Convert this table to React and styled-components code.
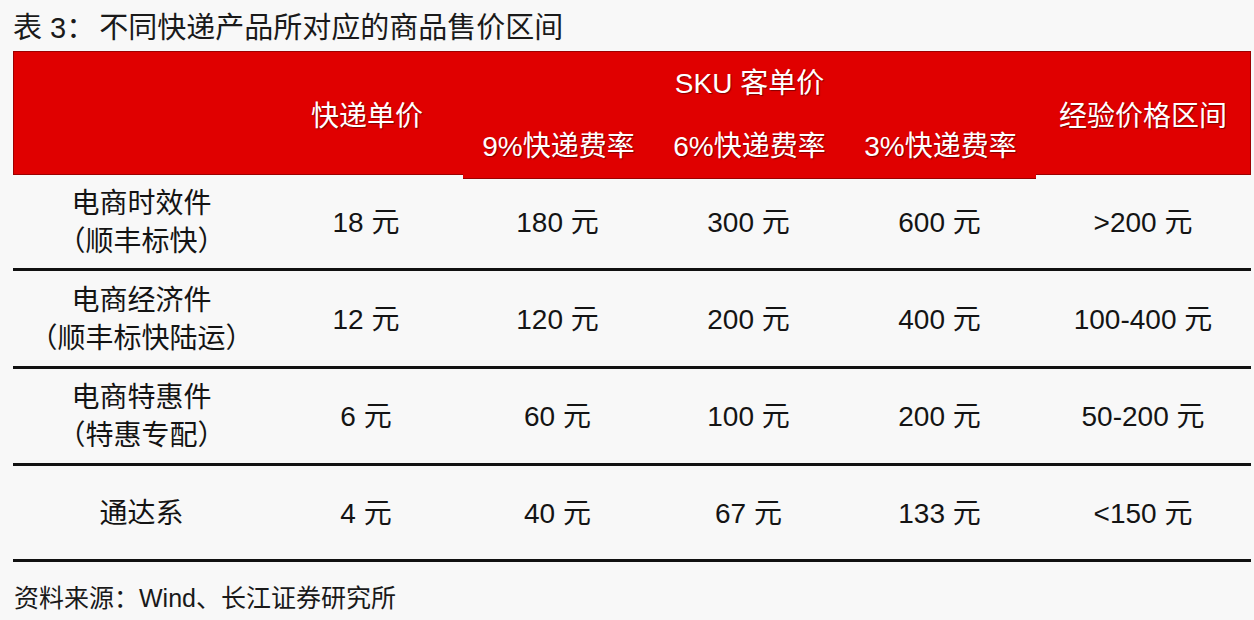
import React from "react";
import styled, { createGlobalStyle } from "styled-components";

const GlobalStyle = createGlobalStyle`
  html, body {
    margin: 0;
    padding: 0;
    background: #f8f8f8;
  }
  body {
    font-family: "Liberation Sans", "Noto Sans CJK SC", sans-serif;
    color: #141414;
  }
`;

const Page = styled.div`
  width: 1254px;
  height: 620px;
  box-sizing: border-box;
  padding: 0 3px 0 13px;
  overflow: hidden;
`;

const Title = styled.div`
  height: 51px;
  display: flex;
  align-items: center;
  font-size: 29px;
  color: #1a1a1a;
  padding-bottom: 2px;
  box-sizing: border-box;

  .label {
    margin-right: 4px;
  }
`;

const COLS = "257px 192px 191px 191px 191px 1fr";

const Header = styled.div`
  display: grid;
  grid-template-columns: ${COLS};
  grid-template-rows: 62px 62px;
  background: #e00000;
  border: 1px solid #9c0000;
  box-sizing: border-box;
  height: 124px;
  color: #fff;
  font-size: 28px;
  text-shadow: 1px 1px 1px rgba(90, 0, 0, 0.7);
`;

const HeadCell = styled.div`
  grid-row: ${({ row }) => row || "1 / span 2"};
  grid-column: ${({ col }) => col};
  display: flex;
  align-items: center;
  justify-content: center;
  padding-bottom: ${({ bottom }) => bottom || 0}px;
`;

const SubHead = styled.div`
  grid-row: 2;
  grid-column: ${({ col }) => col};
  display: flex;
  align-items: center;
  justify-content: center;
  font-size: 28px;
  background: #e00000;
  margin-bottom: -3px;
  padding-bottom: 4px;
  border-bottom: 1px solid #9c0000;
`;

const Row = styled.div`
  display: grid;
  grid-template-columns: ${COLS};
  height: ${({ h }) => h}px;
  border-bottom: 3px solid #111;
  box-sizing: border-box;
  font-size: 28px;
`;

const Cell = styled.div`
  display: flex;
  flex-direction: column;
  align-items: center;
  justify-content: center;
  line-height: 38px;
  padding-top: 2px;
`;

const Footer = styled.div`
  font-size: 25px;
  padding-top: 16px;
  padding-left: 1px;
  color: #1a1a1a;
`;

const rows = [
  { name: ["电商时效件", "（顺丰标快）"], vals: ["18 元", "180 元", "300 元", "600 元", ">200 元"], h: 96 },
  { name: ["电商经济件", "（顺丰标快陆运）"], vals: ["12 元", "120 元", "200 元", "400 元", "100-400 元"], h: 98 },
  { name: ["电商特惠件", "（特惠专配）"], vals: ["6 元", "60 元", "100 元", "200 元", "50-200 元"], h: 97 },
  { name: ["通达系"], vals: ["4 元", "40 元", "67 元", "133 元", "<150 元"], h: 96 },
];

export default function App() {
  return (
    <>
      <GlobalStyle />
      <Page>
        <Title>
          <span className="label">表 3：</span>
          不同快递产品所对应的商品售价区间
        </Title>
        <Header>
          <HeadCell col={2}>快递单价</HeadCell>
          <HeadCell col="3 / span 3" row={1} bottom={4}>
            SKU 客单价
          </HeadCell>
          <SubHead col={3}>9%快递费率</SubHead>
          <SubHead col={4}>6%快递费率</SubHead>
          <SubHead col={5}>3%快递费率</SubHead>
          <HeadCell col={6}>经验价格区间</HeadCell>
        </Header>
        {rows.map((r) => (
          <Row key={r.name[0]} h={r.h}>
            <Cell>
              {r.name.map((n) => (
                <span key={n}>{n}</span>
              ))}
            </Cell>
            {r.vals.map((v, i) => (
              <Cell key={i}>{v}</Cell>
            ))}
          </Row>
        ))}
        <Footer>资料来源：Wind、长江证券研究所</Footer>
      </Page>
    </>
  );
}
